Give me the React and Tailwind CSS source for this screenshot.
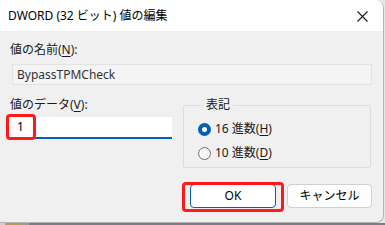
import React from "react";

const font = { fontFamily: '"Noto Sans", "Noto Sans CJK JP", sans-serif' };

function Radio({ checked }) {
  return checked ? (
    <span className="w-[13px] h-[13px] rounded-full bg-[#005fb8] flex items-center justify-center">
      <span className="w-[5px] h-[5px] rounded-full bg-white" />
    </span>
  ) : (
    <span className="w-[13px] h-[13px] rounded-full border border-[#6e6e6e] bg-[#f7f7f7]" />
  );
}

export default function App() {
  return (
    <div
      className="w-[385px] h-[225px] bg-[#e6e6e6] overflow-hidden flex flex-col text-[12px] text-[#1a1a1a]"
      style={font}
    >
      <div className="w-[384px] h-[223px] flex flex-col bg-[#f0f0f0] rounded-tr-[8px] rounded-br-[8px] border-r border-b border-[#b4b4b4] overflow-hidden">
        {/* Title bar */}
        <div className="h-[31px] bg-white flex items-center justify-between pl-[8px] pr-[15px] shrink-0">
          <span className="leading-[16px] text-[12px] text-black">DWORD (32 ビット) 値の編集</span>
          <svg width="11" height="11" viewBox="0 0 11 11" className="mt-[1px]">
            <path d="M0.5 0.5 L10.5 10.5 M10.5 0.5 L0.5 10.5" stroke="#1a1a1a" strokeWidth="1.1" fill="none" />
          </svg>
        </div>

        {/* Body */}
        <div className="flex flex-col pl-[10px] pt-[11px]">
          <div className="leading-[16px]">
            値の名前(<span className="underline underline-offset-2">N</span>):
          </div>
          <div className="mt-[6px] ml-[2px] w-[360px] h-[21px] bg-[#f4f4f4] border border-[#e2e2e2] flex items-center pl-[4px] leading-[16px] text-[#333]">
            BypassTPMCheck
          </div>

          <div className="flex items-start mt-[12px]">
            <div className="w-[162px] flex flex-col">
              <div className="leading-[16px]">
                値のデータ(<span className="underline underline-offset-2">V</span>):
              </div>
              <div className="relative mt-[4px] ml-[2px] w-[160px] h-[22px] bg-white border-b-2 border-[#005fb8] flex items-center pl-[5px] leading-[16px] text-black">
                1
                <span className="absolute left-[-6px] top-[-3px] w-[30px] h-[26px] border-[3px] border-[#ff1a1a] rounded-[4px]" />
              </div>
            </div>

            <fieldset className="ml-[11px] w-[188px] h-[71px] border border-[#dcdcdc] rounded-[2px] pl-[14px]">
              <legend className="ml-[5px] px-[3px] leading-[16px]">表記</legend>
              <div className="flex items-center gap-[4px] mt-[8px] leading-[16px]">
                <Radio checked />
                <span>16 進数(<span className="underline underline-offset-2">H</span>)</span>
              </div>
              <div className="flex items-center gap-[4px] mt-[8px] leading-[16px]">
                <Radio />
                <span>10 進数(<span className="underline underline-offset-2">D</span>)</span>
              </div>
            </fieldset>
          </div>

          <div className="flex justify-end gap-[11px] pr-[11px] mt-[16px]">
            <div className="relative w-[86px] h-[24px] bg-white border border-[#005fb8] rounded-[4px] flex items-center justify-center leading-[16px] text-black">
              OK
              <span className="absolute left-[-9px] top-[-3px] w-[102px] h-[30px] border-[3px] border-[#ff1a1a] rounded-[4px]" />
            </div>
            <div className="w-[85px] h-[24px] bg-[#fdfdfd] border border-[#d0d0d0] rounded-[4px] flex items-center justify-center leading-[16px] text-black">
              キャンセル
            </div>
          </div>
        </div>
      </div>
      <div className="flex h-[2px] mt-auto">
        <span className="w-[5px] bg-[#cfcfcf]" />
        <span className="w-[16px] bg-[#b89a50]" />
        <span className="w-[8px] bg-[#9a9a9a]" />
        <span className="flex-1 bg-[#7c7c86]" />
      </div>
    </div>
  );
}
